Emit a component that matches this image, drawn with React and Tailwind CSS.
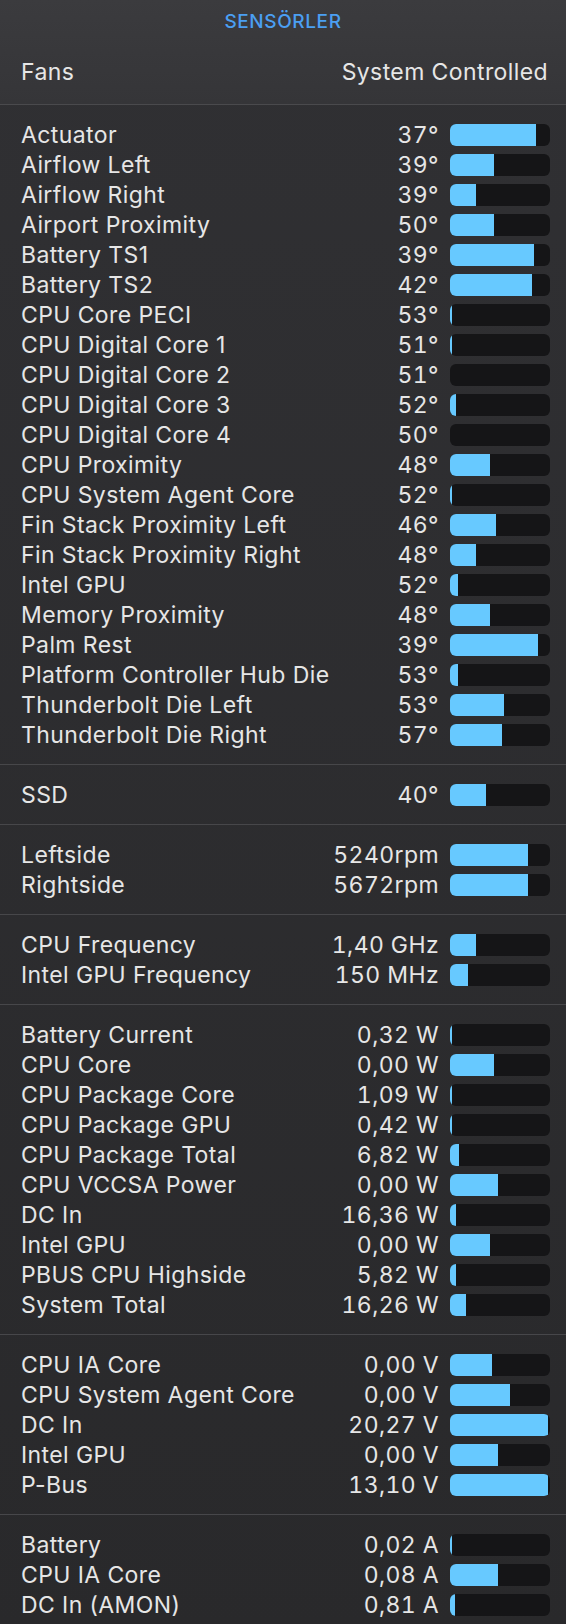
import React from 'react';

const sections = [
  [
    ['Actuator', '37°', 86],
    ['Airflow Left', '39°', 44],
    ['Airflow Right', '39°', 26],
    ['Airport Proximity', '50°', 44],
    ['Battery TS1', '39°', 84],
    ['Battery TS2', '42°', 82],
    ['CPU Core PECI', '53°', 2],
    ['CPU Digital Core 1', '51°', 2],
    ['CPU Digital Core 2', '51°', 0],
    ['CPU Digital Core 3', '52°', 6],
    ['CPU Digital Core 4', '50°', 0],
    ['CPU Proximity', '48°', 40],
    ['CPU System Agent Core', '52°', 2],
    ['Fin Stack Proximity Left', '46°', 46],
    ['Fin Stack Proximity Right', '48°', 26],
    ['Intel GPU', '52°', 8],
    ['Memory Proximity', '48°', 40],
    ['Palm Rest', '39°', 88],
    ['Platform Controller Hub Die', '53°', 8],
    ['Thunderbolt Die Left', '53°', 54],
    ['Thunderbolt Die Right', '57°', 52],
  ],
  [['SSD', '40°', 36]],
  [
    ['Leftside', '5240rpm', 78],
    ['Rightside', '5672rpm', 78],
  ],
  [
    ['CPU Frequency', '1,40 GHz', 26],
    ['Intel GPU Frequency', '150 MHz', 18],
  ],
  [
    ['Battery Current', '0,32 W', 2],
    ['CPU Core', '0,00 W', 44],
    ['CPU Package Core', '1,09 W', 2],
    ['CPU Package GPU', '0,42 W', 2],
    ['CPU Package Total', '6,82 W', 9],
    ['CPU VCCSA Power', '0,00 W', 48],
    ['DC In', '16,36 W', 6],
    ['Intel GPU', '0,00 W', 40],
    ['PBUS CPU Highside', '5,82 W', 6],
    ['System Total', '16,26 W', 16],
  ],
  [
    ['CPU IA Core', '0,00 V', 42],
    ['CPU System Agent Core', '0,00 V', 60],
    ['DC In', '20,27 V', 98],
    ['Intel GPU', '0,00 V', 48],
    ['P-Bus', '13,10 V', 98],
  ],
  [
    ['Battery', '0,02 A', 2],
    ['CPU IA Core', '0,08 A', 48],
    ['DC In (AMON)', '0,81 A', 5],
  ],
];

const Bar = ({ pct }) => (
  <div className="ml-[11px] h-[22px] w-[100px] shrink-0 overflow-hidden rounded-[6px] bg-[#151517]">
    {/* fill width comes from data */}
    <div className="h-full bg-[#67c9ff]" style={{ width: `${pct}%` }} />
  </div>
);

const Row = ({ label, value, pct }) => (
  <div className="flex h-[30px] items-center pl-[21px] pr-[16px]">
    <span className="flex-1 truncate">{label}</span>
    <span className="text-right tabular-nums">{value}</span>
    <Bar pct={pct} />
  </div>
);

export default function App() {
  return (
    <div
      className="min-h-[1624px] w-full bg-gradient-to-b from-[#303033] to-[#29292b] text-[23px] leading-[30px] tracking-[0.4px] text-[#e6e6e6]"
      style={{ fontFamily: 'Inter, "Noto Sans", sans-serif' }}
    >
      <div className="bg-gradient-to-b from-[#3b3b3e] to-[#353538] border-b border-[#4a4a4d]">
        <div className="flex h-[44px] items-center justify-center text-[19px] font-medium tracking-[0.6px] text-[#4b9ff2]">
          SENSÖRLER
        </div>
        <div className="flex h-[30px] mt-[13px] mb-[17px] items-center justify-between pl-[21px] pr-[18px]">
          <span>Fans</span>
          <span>System Controlled</span>
        </div>
      </div>

      {sections.map((rows, i) => (
        <div
          key={i}
          className={`pt-[15px] pb-[14px] ${i < sections.length - 1 ? 'border-b border-[#47474a]' : ''}`}
        >
          {rows.map(([label, value, pct], j) => (
            <Row key={j} label={label} value={value} pct={pct} />
          ))}
        </div>
      ))}
    </div>
  );
}
